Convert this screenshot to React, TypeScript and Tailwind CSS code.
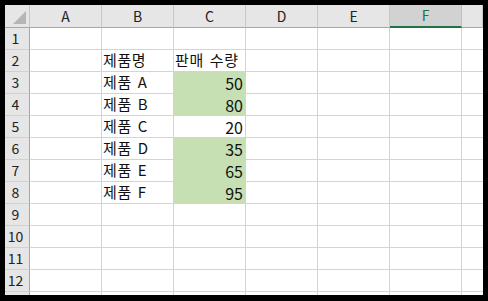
import React from "react"

const cols = ["A", "B", "C", "D", "E", "F", ""]

type Row = { name?: string; qty?: string; green?: boolean }

const data: Row[] = [
  {},
  { name: "제품명", qty: "판매 수량" },
  { name: "제품 A", qty: "50", green: true },
  { name: "제품 B", qty: "80", green: true },
  { name: "제품 C", qty: "20" },
  { name: "제품 D", qty: "35", green: true },
  { name: "제품 E", qty: "65", green: true },
  { name: "제품 F", qty: "95", green: true },
  {},
  {},
  {},
  {},
  {},
]

const font = { fontFamily: '"Noto Sans CJK KR", "Noto Sans", sans-serif' }

export default function App() {
  return (
    <div className="w-[488px] h-[301px] bg-black pt-[5px] pl-[5px] pr-[5px] pb-[6px]">
      <div
        className="h-full w-full overflow-hidden bg-white grid grid-cols-[25px_repeat(6,72px)_1fr] grid-rows-[23px] auto-rows-[22px] text-[15px] text-[#111]"
        style={font}
      >
        {/* corner */}
        <div className="bg-[#e6e6e6] border-r border-b border-r-[#c8c8c8] border-b-[#a6a6a6] flex items-end justify-end pr-[3px] pb-[3px]">
          <svg width="13" height="13" viewBox="0 0 13 13">
            <polygon points="13,0 13,13 0,13" fill="#b5b5b5" />
          </svg>
        </div>

        {/* column headers */}
        {cols.map((c, i) =>
          c === "F" ? (
            <div
              key={i}
              className="bg-[#d2d2d2] border-r border-r-[#c0c0c0] border-b-2 border-b-[#217346] flex items-center justify-center text-[14px] text-[#217346]"
            >
              {c}
            </div>
          ) : (
            <div
              key={i}
              className="bg-[#e6e6e6] border-r border-b border-r-[#c8c8c8] border-b-[#a6a6a6] flex items-center justify-center text-[14px] text-[#222]"
            >
              {c}
            </div>
          )
        )}

        {data.map((r, ri) => (
          <React.Fragment key={ri}>
            <div className="bg-[#e6e6e6] border-r border-b border-r-[#a6a6a6] border-b-[#d0d0d0] flex items-center justify-center pr-[3px] text-[14px] text-[#222]">
              {ri < 12 ? ri + 1 : ""}
            </div>
            <div className="border-r border-b border-[#d4d4d4]" />
            <div className="border-r border-b border-[#d4d4d4] flex items-center pl-[1px] whitespace-nowrap tracking-[0.6px] [word-spacing:2px]">
              {r.name}
            </div>
            {r.green ? (
              <div className="bg-[#c6e0b4] border-r border-b border-[#c6e0b4] shadow-[-1px_0_0_0_#c6e0b4,0_-1px_0_0_#c6e0b4,-1px_-1px_0_0_#c6e0b4] flex items-center justify-end pr-[2px] text-[16px]">
                {r.qty}
              </div>
            ) : (
              <div
                className={
                  "border-r border-b border-[#d4d4d4] flex items-center whitespace-nowrap " +
                  (ri === 1
                    ? "justify-start pl-[1px] tracking-[0.6px] [word-spacing:2px]"
                    : "justify-end pr-[2px] text-[16px]")
                }
              >
                {r.qty}
              </div>
            )}
            <div className="border-r border-b border-[#d4d4d4]" />
            <div className="border-r border-b border-[#d4d4d4]" />
            <div className="border-r border-b border-[#d4d4d4]" />
            <div className="border-b border-[#d4d4d4]" />
          </React.Fragment>
        ))}
      </div>
    </div>
  )
}
